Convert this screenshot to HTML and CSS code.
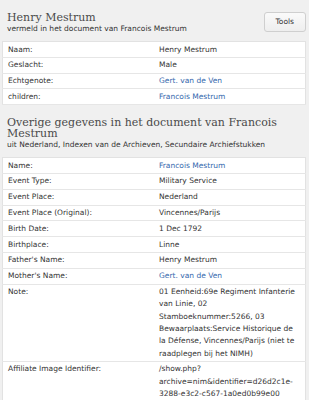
FILE: index.html
```html
<!DOCTYPE html>
<html lang="en">
<head>
    <meta charset="UTF-8">
    <meta name="viewport" content="width=device-width, initial-scale=1.0">
    <title>Henry Mestrum</title>
    <link rel="stylesheet" href="styles.css">
</head>
<body>
<div class="page">
    <div class="section-head">
        <div class="titles">
            <h2>Henry Mestrum</h2>
            <div class="subtitle">vermeld in het document van Francois Mestrum</div>
        </div>
        <button class="tools-btn">Tools</button>
    </div>
    <table class="details">
        <tr><td>Naam:</td><td>Henry Mestrum</td></tr>
        <tr><td>Geslacht:</td><td>Male</td></tr>
        <tr><td>Echtgenote:</td><td><a href="#">Gert. van de Ven</a></td></tr>
        <tr><td>children:</td><td><a href="#">Francois Mestrum</a></td></tr>
    </table>

    <div class="section-head">
        <div class="titles">
            <h2>Overige gegevens in het document van Francois Mestrum</h2>
            <div class="subtitle">uit Nederland, Indexen van de Archieven, Secundaire Archiefstukken</div>
        </div>
    </div>
    <table class="details">
        <tr><td>Name:</td><td><a href="#">Francois Mestrum</a></td></tr>
        <tr><td>Event Type:</td><td>Military Service</td></tr>
        <tr><td>Event Place:</td><td>Nederland</td></tr>
        <tr><td>Event Place (Original):</td><td>Vincennes/Parijs</td></tr>
        <tr><td>Birth Date:</td><td>1 Dec 1792</td></tr>
        <tr><td>Birthplace:</td><td>Linne</td></tr>
        <tr><td>Father's Name:</td><td>Henry Mestrum</td></tr>
        <tr><td>Mother's Name:</td><td><a href="#">Gert. van de Ven</a></td></tr>
        <tr><td>Note:</td><td>01 Eenheid:69e Regiment Infanterie van Linie, 02 Stamboeknummer:5266, 03 Bewaarplaats:Service Historique de la Défense, Vincennes/Parijs (niet te raadplegen bij het NIMH)</td></tr>
        <tr><td>Affiliate Image Identifier:</td><td class="break">/show.php?archive=nim&amp;identifier=d26d2c1e-3288-e3c2-c567-1a0ed0b99e00</td></tr>
    </table>
</div>
</body>
</html>
```

FILE: styles.css
```css
body {
    font-family: "DejaVu Sans", Verdana, sans-serif;
    font-size: 7.5px;
    color: #333;
    margin: 0;
    background-color: #f0f0f0;
}
.page {
    padding: 0 3px 0 2px;
}
.section-head {
    display: flex;
    justify-content: space-between;
    align-items: flex-start;
    padding: 12px 0 6px 5px;
}
h2 {
    font-family: "DejaVu Serif", Georgia, serif;
    font-size: 11px;
    font-weight: normal;
    line-height: 11px;
    color: #4a4a4a;
    margin: 0;
}
.subtitle {
    line-height: 12px;
    color: #333;
}
.tools-btn {
    font-family: "DejaVu Sans", Verdana, sans-serif;
    font-size: 7.5px;
    color: #333;
    background: linear-gradient(#fafafa, #eeeeee);
    border: 1px solid #cfcfcf;
    border-radius: 3px;
    padding: 4px 11px;
    margin-top: 0;
    line-height: 10px;
}
.details {
    width: 100%;
    border-collapse: collapse;
    background: #fff;
    border: 1px solid #e2e2e2;
}
.details td {
    width: 50%;
    padding: 1.5px 5px 1px;
    line-height: 12.3px;
    vertical-align: top;
    border-bottom: 1px solid #e6e6e6;
}
.details a {
    color: #3468ad;
    text-decoration: none;
}
.break {
    overflow-wrap: anywhere;
}
```
